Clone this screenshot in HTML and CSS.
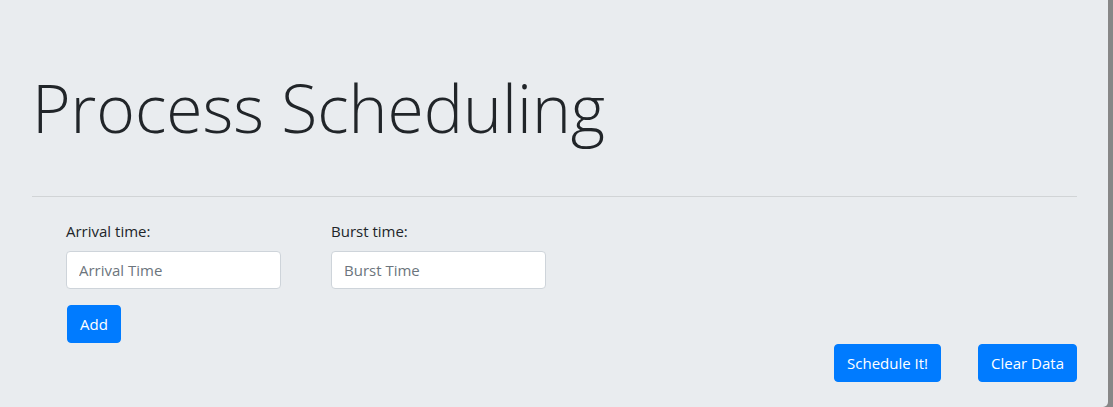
FILE: index.html
```html
<!DOCTYPE html>
<html lang="en">
<head>
<meta charset="utf-8">
<title>Process Scheduling</title>
<link rel="stylesheet" href="styles.css">
</head>
<body>
<div class="jumbotron">
  <h1 class="title">Process Scheduling</h1>
  <hr class="divider">
  <form class="entry">
    <div class="fields">
      <div class="field">
        <label class="field-label" for="arrival">Arrival time:</label>
        <input class="field-input" id="arrival" type="text" placeholder="Arrival Time">
      </div>
      <div class="field">
        <label class="field-label" for="burst">Burst time:</label>
        <input class="field-input" id="burst" type="text" placeholder="Burst Time">
      </div>
    </div>
    <button type="button" class="btn">Add</button>
  </form>
  <div class="actions">
    <button type="button" class="btn">Schedule It!</button>
    <button type="button" class="btn">Clear Data</button>
  </div>
</div>
</body>
</html>
```
FILE: styles.css
```css
html, body {
  margin: 0;
  padding: 0;
}
body {
  background: #878787;
  font-family: "Open Sans", "Noto Sans", sans-serif;
  color: #212529;
  width: 1113px;
  height: 407px;
  overflow: hidden;
}
.jumbotron {
  box-sizing: border-box;
  width: 1108px;
  height: 407px;
  background: #e9ecef;
  padding: 68px 31px 0 32px;
  border-bottom-right-radius: 5px;
}
.title {
  margin: 0 0 49px 0;
  font-size: 66px;
  font-weight: 300;
  line-height: 1.2;
  letter-spacing: 0;
}
.divider {
  margin: 0;
  border: 0;
  border-top: 1px solid rgba(0, 0, 0, 0.1);
}
.entry {
  padding: 22px 0 0 34px;
}
.fields {
  display: flex;
  gap: 50px;
  margin-bottom: 16px;
}
.field {
  display: flex;
  flex-direction: column;
  width: 215px;
}
.field-label {
  font-size: 15px;
  line-height: 24px;
  margin-bottom: 8px;
}
.field-input {
  box-sizing: border-box;
  height: 38px;
  width: 215px;
  padding: 6px 12px;
  font-family: inherit;
  font-size: 15px;
  color: #495057;
  background: #fff;
  border: 1px solid #ced4da;
  border-radius: 4px;
}
.field-input::placeholder {
  color: #6c757d;
}
.btn {
  box-sizing: border-box;
  height: 38px;
  padding: 6px 12px;
  font-family: inherit;
  font-size: 15px;
  line-height: 24px;
  color: #fff;
  background: #007bff;
  border: 1px solid #007bff;
  border-radius: 4px;
  margin-left: 1px;
}
.actions {
  display: flex;
  justify-content: flex-end;
  gap: 36px;
  margin-top: 1px;
}
```
